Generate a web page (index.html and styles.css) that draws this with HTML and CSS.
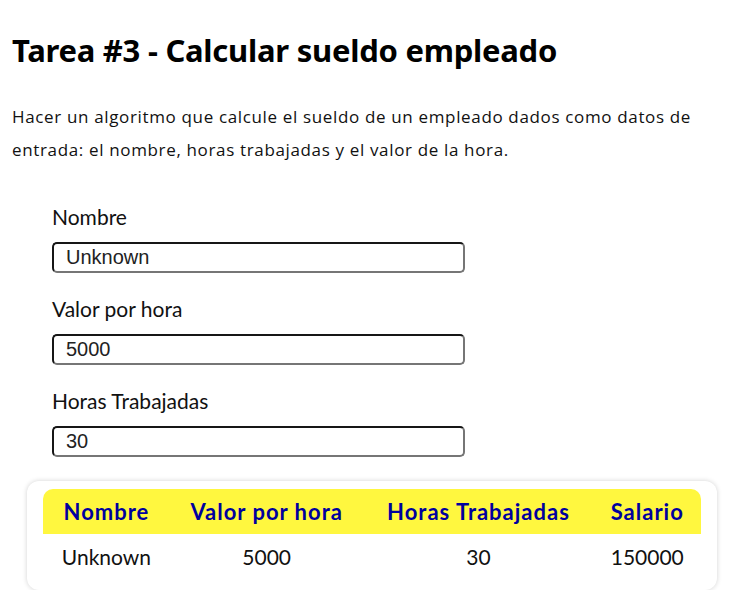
FILE: index.html
```html
<!DOCTYPE html>
<html lang="es">
<head>
<meta charset="utf-8">
<title>Tarea #3</title>
<link rel="stylesheet" href="styles.css">
</head>
<body>
<h1 class="title">Tarea #3 - Calcular sueldo empleado</h1>
<p class="desc">Hacer un algoritmo que calcule el sueldo de un empleado dados como datos de entrada: el nombre, horas trabajadas y el valor de la hora.</p>
<form class="form">
  <label class="field">
    <span class="label">Nombre</span>
    <input class="input" type="text" value="Unknown">
  </label>
  <label class="field">
    <span class="label">Valor por hora</span>
    <input class="input" type="text" value="5000">
  </label>
  <label class="field">
    <span class="label">Horas Trabajadas</span>
    <input class="input" type="text" value="30">
  </label>
</form>
<div class="card">
  <table class="table">
    <thead>
      <tr><th>Nombre</th><th>Valor por hora</th><th>Horas Trabajadas</th><th>Salario</th></tr>
    </thead>
    <tbody>
      <tr><td>Unknown</td><td>5000</td><td>30</td><td>150000</td></tr>
    </tbody>
  </table>
</div>
</body>
</html>
```
FILE: styles.css
```css
body {
  margin: 0;
  padding: 0 12px;
  font-family: "Open Sans", "Noto Sans", sans-serif;
  color: #000;
  background: #fff;
}
.title {
  font-family: "Noto Sans", sans-serif;
  font-size: 31px;
  font-weight: 700;
  margin: 28px 0 0;
  line-height: 44px;
  letter-spacing: -0.25px;
}
.desc {
  font-family: "Open Sans", sans-serif;
  font-size: 17px;
  line-height: 33px;
  margin: 28px 0 0;
  color: #111;
  letter-spacing: 0.65px;
  max-width: 690px;
}
.form {
  display: flex;
  flex-direction: column;
  gap: 24px;
  margin: 39px 0 0 40px;
}
.field {
  display: flex;
  flex-direction: column;
  gap: 13px;
}
.label {
  font-family: "Lato", sans-serif;
  font-size: 21px;
  line-height: 24px;
  color: #111;
}
.input {
  box-sizing: border-box;
  width: 413px;
  height: 31px;
  margin: 0;
  padding: 0 12px;
  border: 2px solid;
  border-color: #161616 #767676 #767676 #161616;
  border-radius: 5px;
  font-family: "Liberation Sans", Arial, sans-serif;
  font-size: 20px;
  color: #222;
  background: #fff;
}
.card {
  margin: 24px 7px 0 15px;
  padding: 8px 16px 11px;
  background: #fff;
  border-radius: 12px;
  box-shadow: 0 0 5px rgba(0,0,0,0.18);
}
.table {
  width: 100%;
  border-collapse: collapse;
  font-family: "Lato", sans-serif;
}
.table th {
  background: #fff73f;
  color: #00009e;
  font-size: 22px;
  font-weight: 700;
  letter-spacing: 1px;
  height: 45px;
  padding: 0 4px;
  text-align: center;
}
.table th:first-child { border-top-left-radius: 10px; }
.table th:last-child { border-top-right-radius: 10px; }
.table td {
  font-size: 21px;
  height: 45px;
  text-align: center;
  color: #111;
  padding: 0 8px;
}
```
